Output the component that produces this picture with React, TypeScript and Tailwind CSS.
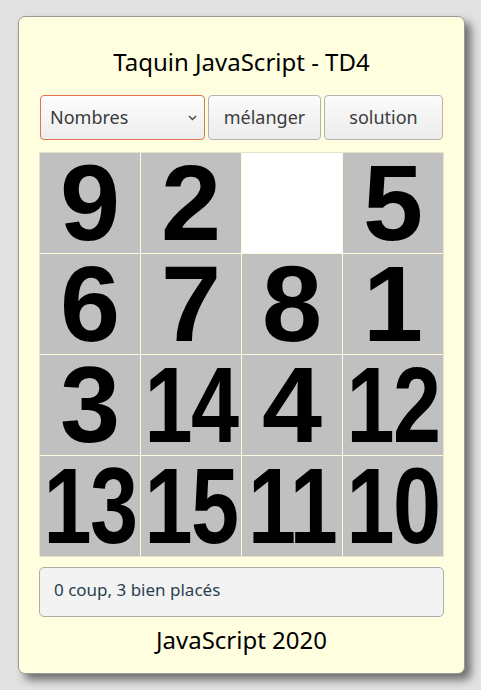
import { useState } from 'react'

const tiles = [9, 2, 0, 5, 6, 7, 8, 1, 3, 14, 4, 12, 13, 15, 11, 10]

const ui = { fontFamily: '"Noto Sans", "Open Sans", sans-serif' }
const digits = { fontFamily: '"Liberation Sans", Arial, sans-serif' }

function Tile({ n }: { n: number }) {
  if (n === 0) return <div className="h-[100px] w-[100px] bg-white" />
  return (
    <div className="flex h-[100px] w-[100px] items-center justify-center overflow-hidden bg-[#c0c0c0]">
      <span
        style={digits}
        className={`block text-[108px] font-bold leading-[96px] text-black ${n > 9 ? 'scale-x-[0.8] tracking-[-2px]' : ''}`}
      >
        {n}
      </span>
    </div>
  )
}

export default function App() {
  const [mode, setMode] = useState('Nombres')

  return (
    <div className="min-h-screen bg-[#e1e1e1] pl-[18px] pt-[16px]" style={ui}>
      <div className="w-[447px] rounded-[7px] border border-[#999] bg-[#ffffe0] px-[20px] pb-[17px] pt-[29px] shadow-[6px_6px_8px_#6f6f6f]">
        <h1 className="text-center text-[24px] leading-[32px] text-black">Taquin JavaScript - TD4</h1>

        <div className="ml-px mt-[17px] flex h-[45px] gap-[3px]">
          <div className="relative w-[165px]">
            <select
              value={mode}
              onChange={(e) => setMode(e.target.value)}
              style={ui}
              className="h-full w-full appearance-none rounded-[4px] border border-[#e2734d] bg-gradient-to-b from-[#fdfdfd] to-[#ededed] pl-[9px] text-[18px] text-[#3a3a3a] outline-none"
            >
              <option>Nombres</option>
              <option>Image</option>
            </select>
            <svg
              className="pointer-events-none absolute right-[8px] top-[20px]"
              width="9"
              height="6"
              viewBox="0 0 9 6"
              fill="none"
              stroke="#444"
              strokeWidth="1.4"
            >
              <path d="M1 1l3.5 3.5L8 1" />
            </svg>
          </div>
          <button className="w-[113px] rounded-[4px] border border-[#b3b3b3] bg-gradient-to-b from-[#fbfbfb] to-[#ececec] text-[18px] text-[#3c3c3c]">
            mélanger
          </button>
          <button className="w-[119px] rounded-[4px] border border-[#b3b3b3] bg-gradient-to-b from-[#fbfbfb] to-[#ececec] text-[18px] text-[#3c3c3c]">
            solution
          </button>
        </div>

        <div className="mt-[12px] grid w-[405px] grid-cols-4 gap-px border border-[#e4e4c8] bg-[#fbfbdc]">
          {tiles.map((n, i) => (
            <Tile key={i} n={n} />
          ))}
        </div>

        <div className="mt-[10px] h-[50px] w-[405px] rounded-[5px] border border-[#ababab] bg-[#f3f3f3] pl-[14px] pt-[10px] text-[17px] leading-[24px] text-[#2b3f50]">
          0 coup, 3 bien placés
        </div>

        <p className="mt-[7px] text-center text-[24px] leading-[32px] text-black">JavaScript 2020</p>
      </div>
    </div>
  )
}
